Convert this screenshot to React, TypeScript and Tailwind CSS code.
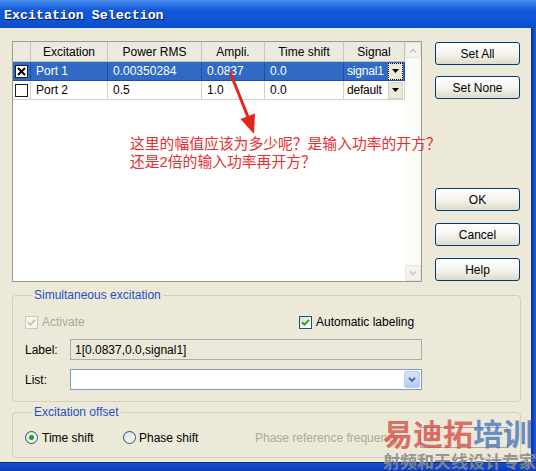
import React from 'react';

const font = "font-['Liberation_Sans','Noto_Sans_CJK_SC',sans-serif]";

const XpButton: React.FC<{ label: string }> = ({ label }) => (
  <button className="h-[23px] w-[85px] rounded-[3px] border border-[#003c74] bg-gradient-to-b from-[#ffffff] via-[#f5f4ef] to-[#dedacb] text-[12px] text-black">
    {label}
  </button>
);

const XpCheck: React.FC<{ checked?: boolean; disabled?: boolean }> = ({ checked, disabled }) => (
  <span
    className={`flex h-[13px] w-[13px] shrink-0 items-center justify-center border ${
      disabled ? 'border-[#cac8bb] bg-[#f5f4ef]' : 'border-[#1c5180] bg-gradient-to-br from-[#dcdcd7] to-white'
    }`}
  >
    {checked && (
      <svg width="9" height="9" viewBox="0 0 9 9">
        <path d="M1 4.2 L3.4 6.6 L8 1.8" stroke={disabled ? '#c4c2b3' : '#21a121'} strokeWidth="1.8" fill="none" />
      </svg>
    )}
  </span>
);

const XpRadio: React.FC<{ checked?: boolean }> = ({ checked }) => (
  <span className="flex h-[13px] w-[13px] shrink-0 items-center justify-center rounded-full border border-[#1c5180] bg-gradient-to-br from-[#dcdcd7] to-white">
    {checked && <span className="h-[5px] w-[5px] rounded-full bg-[#21a121]" />}
  </span>
);

const SmallDrop: React.FC<{ focus?: boolean }> = ({ focus }) => (
  <span
    className={`flex h-[17px] w-[15px] shrink-0 items-center justify-center border bg-[#ece9d8] ${
      focus ? 'border-dotted border-black' : 'border-[#d4d0c8]'
    }`}
  >
    <svg width="7" height="4" viewBox="0 0 7 4">
      <path d="M0 0 H7 L3.5 4 Z" fill="#000" />
    </svg>
  </span>
);

const headers = ['', 'Excitation', 'Power RMS', 'Ampli.', 'Time shift', 'Signal'];

const rows = [
  { checked: true, port: 'Port 1', power: '0.00350284', ampli: '0.0837', shift: '0.0', signal: 'signal1', selected: true },
  { checked: false, port: 'Port 2', power: '0.5', ampli: '1.0', shift: '0.0', signal: 'default', selected: false },
];

export default function App() {
  return (
    <div className={`relative flex h-[471px] w-[536px] flex-col overflow-hidden bg-[#0b3fc4] ${font}`}>
      {/* title bar */}
      <div className="flex h-[28px] items-center bg-gradient-to-b from-[#4a8ff0] via-[#1459d8] via-35% to-[#0b4fcf] pl-[4px] pt-[4px]">
        <span className="font-['Liberation_Mono',monospace] text-[13.3px] font-bold text-white [text-shadow:1px_1px_0_#0a1c5c]">
          Excitation Selection
        </span>
      </div>

      <div className="flex flex-1">
        <div className="w-[531px] bg-[#ece9d8] pl-[12px] pt-[13px]">
          {/* table + buttons */}
          <div className="flex h-[241px]">
            <div className="flex w-[410px] border border-[#9a9a94] bg-white">
              <div className="w-[392px]">
                <div className="grid grid-cols-[18px_77px_94px_63px_79px_61px]">
                  {headers.map((h, i) => (
                    <div
                      key={i}
                      className="flex h-[20px] items-center justify-center border-b border-r border-[#c9c6b6] bg-[#ebeadf] text-[12px] text-black"
                    >
                      {h}
                    </div>
                  ))}
                  {rows.map((r) => {
                    const cell = `flex h-[19px] items-center border-b border-r text-[12px] ${
                      r.selected ? 'border-[#1d4fa0] bg-[#316ac5] text-white' : 'border-[#d4d2c8] bg-white text-black'
                    }`;
                    return (
                      <React.Fragment key={r.port}>
                        <div className={`${cell} pl-[2px]`}>
                          <span className="flex h-[13px] w-[13px] items-center justify-center border border-[#1c1c1c] bg-white">
                            {r.checked && (
                              <svg width="9" height="9" viewBox="0 0 9 9">
                                <path d="M1 1 L8 8 M8 1 L1 8" stroke="#000" strokeWidth="2" />
                              </svg>
                            )}
                          </span>
                        </div>
                        <div className={`${cell} pl-[5px]`}>{r.port}</div>
                        <div className={`${cell} pl-[5px]`}>{r.power}</div>
                        <div className={`${cell} pl-[5px]`}>{r.ampli}</div>
                        <div className={`${cell} pl-[5px]`}>{r.shift}</div>
                        <div className={`${cell} justify-between pl-[3px] pr-[1px]`}>
                          <span className="tracking-[-0.2px]">{r.signal}</span>
                          <SmallDrop focus={r.selected} />
                        </div>
                      </React.Fragment>
                    );
                  })}
                </div>
              </div>
              {/* scrollbar */}
              <div className="flex w-[16px] flex-col justify-between bg-[#fbfbf7]">
                <div className="flex h-[16px] items-center justify-center rounded-[2px] border border-[#e6e4da] bg-[#f3f2ec]">
                  <svg width="8" height="5" viewBox="0 0 8 5">
                    <path d="M1 4.5 L4 1.5 L7 4.5" stroke="#c9c7bb" strokeWidth="1.6" fill="none" />
                  </svg>
                </div>
                <div className="flex h-[16px] items-center justify-center rounded-[2px] border border-[#e6e4da] bg-[#f3f2ec]">
                  <svg width="8" height="5" viewBox="0 0 8 5">
                    <path d="M1 0.5 L4 3.5 L7 0.5" stroke="#c9c7bb" strokeWidth="1.6" fill="none" />
                  </svg>
                </div>
              </div>
            </div>

            <div className="ml-[13px] flex flex-col justify-between pb-[1px] pt-[1px]">
              <div className="flex flex-col gap-[11px]">
                <XpButton label="Set All" />
                <XpButton label="Set None" />
              </div>
              <div className="flex flex-col gap-[12px]">
                <XpButton label="OK" />
                <XpButton label="Cancel" />
                <XpButton label="Help" />
              </div>
            </div>
          </div>

          {/* Simultaneous excitation */}
          <fieldset className="mt-[6px] w-[509px] rounded-[4px] border border-[#d0d0bf] px-[12px] pb-[11px] pt-[11px]">
            <legend className="ml-[7px] px-[2px] text-[12px] leading-[15px] text-[#1f4fc8]">Simultaneous excitation</legend>
            <div className="flex h-[16px] items-center">
              <div className="flex w-[274px] items-center gap-[4px]">
                <XpCheck checked disabled />
                <span className="text-[12px] text-[#aca899]">Activate</span>
              </div>
              <div className="flex items-center gap-[4px]">
                <XpCheck checked />
                <span className="text-[12px] text-black">Automatic labeling</span>
              </div>
            </div>
            <div className="mt-[9px] flex h-[21px] items-center">
              <span className="w-[45px] text-[12px] text-black">Label:</span>
              <div className="flex h-[21px] w-[352px] items-center border border-[#a5acb2] bg-[#ebe8d7] pl-[4px] text-[12px] text-black">
                1[0.0837,0.0,signal1]
              </div>
            </div>
            <div className="mt-[9px] flex h-[21px] items-center">
              <span className="w-[45px] text-[12px] text-black">List:</span>
              <div className="flex h-[21px] w-[352px] items-center justify-end border border-[#7f9db9] bg-white pr-[1px]">
                <span className="flex h-[17px] w-[16px] items-center justify-center rounded-[2px] border border-[#b9cdf5] bg-gradient-to-b from-[#d6e3fd] to-[#b3c9f5]">
                  <svg width="8" height="5" viewBox="0 0 8 5">
                    <path d="M1 0.8 L4 3.8 L7 0.8" stroke="#4d6185" strokeWidth="1.8" fill="none" />
                  </svg>
                </span>
              </div>
            </div>
          </fieldset>

          {/* Excitation offset */}
          <fieldset className="mt-[3px] w-[509px] rounded-[4px] border border-[#d0d0bf] px-[12px] pb-[9px] pt-[7px]">
            <legend className="ml-[7px] px-[2px] text-[12px] leading-[15px] text-[#1f4fc8]">Excitation offset</legend>
            <div className="flex h-[21px] items-center text-[12px]">
              <div className="flex w-[98px] items-center gap-[4px]">
                <XpRadio checked />
                <span className="text-black">Time shift</span>
              </div>
              <div className="flex w-[132px] items-center gap-[3px]">
                <XpRadio />
                <span className="text-black">Phase shift</span>
              </div>
              <span className="w-[165px] text-[#aca899]">Phase reference frequency:</span>
              <div className="flex h-[21px] w-[88px] items-center border border-[#9fa8b4] pl-[6px] text-[#c2bfb0]">37</div>
            </div>
          </fieldset>
        </div>
        <div className="flex-1 bg-gradient-to-r from-[#0a2f9c] to-[#1660e8]" />
      </div>
      <div className="h-[9px] border-t border-[#0a2a8a] bg-gradient-to-b from-[#1550d4] to-[#0a3cb8]" />

      {/* annotation */}
      <svg className="pointer-events-none absolute left-0 top-0" width="536" height="471" viewBox="0 0 536 471">
        <path d="M230 72 L248 117" stroke="#e8231c" strokeWidth="3" />
        <path d="M240.5 119 L255 113.5 L254 134 Z" fill="#e8231c" />
      </svg>
      <div className="pointer-events-none absolute left-[130px] top-[135px] text-[14.8px] leading-[18px] text-[#e62e2e]">
        <div>这里的幅值应该为多少呢？是输入功率的开方？</div>
        <div>还是2倍的输入功率再开方？</div>
      </div>

      {/* watermark */}
      <div className="pointer-events-none absolute left-[383px] top-[414px] whitespace-nowrap font-['Noto_Sans_CJK_SC',sans-serif]">
        <div className="text-[30px] font-bold leading-[36px]">
          <span className="text-[#d9463e]/75">易迪拓</span>
          <span className="text-[#3d6fb8]/75">培训</span>
        </div>
        <div className="text-[17px] font-bold leading-[22px] text-[#8a8a8a]/90">射频和天线设计专家</div>
      </div>
    </div>
  );
}
